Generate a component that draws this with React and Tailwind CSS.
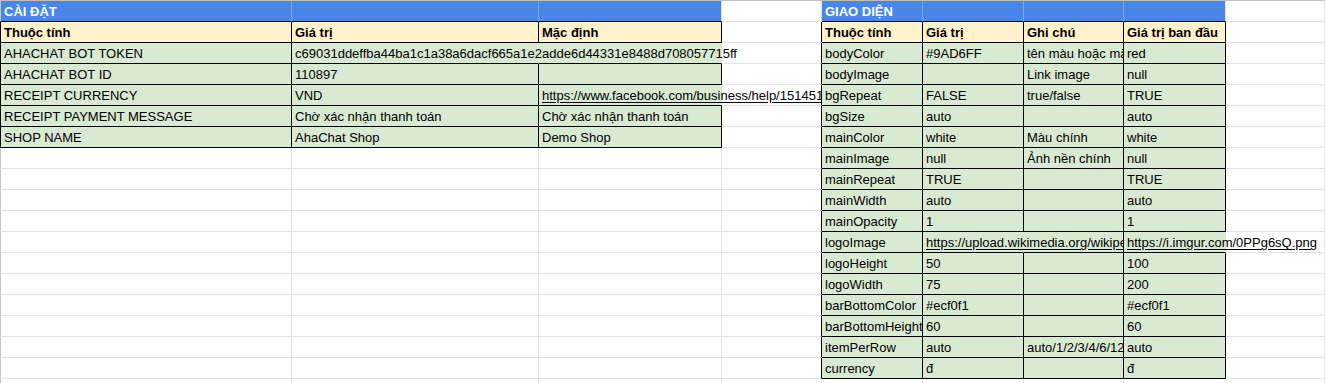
import React from "react";

const COLS = [
  "w-[292px] shrink-0",
  "w-[247px] shrink-0",
  "w-[183px] shrink-0",
  "w-[100px] shrink-0",
  "w-[101px] shrink-0",
  "w-[101px] shrink-0",
  "w-[100px] shrink-0",
  "w-[102px] shrink-0",
  "flex-1 min-w-0",
];

const BG = {
  blue: "bg-[#4a86e8]",
  yellow: "bg-[#fff2cc]",
  green: "bg-[#d9ead3]",
  white: "bg-white",
};

const RIGHT = {
  black: "border-r-black",
  grid: "border-r-[#e2e2e2]",
  blue: "border-r-[#7ea5e8]",
  none: "border-r-transparent",
};

const BOTTOM = {
  black: "border-b-black",
  grid: "border-b-[#e2e2e2]",
};

const LEFT = {
  black: "border-l border-l-black",
  grid: "border-l border-l-[#c4c4c4]",
};

const SETTINGS = [
  ["AHACHAT BOT TOKEN", "c69031ddeffba44ba1c1a38a6dacf665a1e2adde6d44331e8488d708057715ff", ""],
  ["AHACHAT BOT ID", "110897", ""],
  ["RECEIPT CURRENCY", "VND", "https://www.facebook.com/business/help/1514518578593577"],
  ["RECEIPT PAYMENT MESSAGE", "Chờ xác nhận thanh toán", "Chờ xác nhận thanh toán"],
  ["SHOP NAME", "AhaChat Shop", "Demo Shop"],
];

const THEME = [
  ["bodyColor", "#9AD6FF", "tên màu hoặc mã màu", "red"],
  ["bodyImage", "", "Link image", "null"],
  ["bgRepeat", "FALSE", "true/false", "TRUE"],
  ["bgSize", "auto", "", "auto"],
  ["mainColor", "white", "Màu chính", "white"],
  ["mainImage", "null", "Ảnh nền chính", "null"],
  ["mainRepeat", "TRUE", "", "TRUE"],
  ["mainWidth", "auto", "", "auto"],
  ["mainOpacity", "1", "", "1"],
  ["logoImage", "https://upload.wikimedia.org/wikipedia/commons/a/ab/Logo.png", "", "https://i.imgur.com/0PPg6sQ.png"],
  ["logoHeight", "50", "", "100"],
  ["logoWidth", "75", "", "200"],
  ["barBottomColor", "#ecf0f1", "", "#ecf0f1"],
  ["barBottomHeight", "60", "", "60"],
  ["itemPerRow", "auto", "auto/1/2/3/4/6/12", "auto"],
  ["currency", "đ", "", "đ"],
];

// text that spills over empty neighbours (row-col -> clip width class)
const SPILL = {
  "3-1": "w-[526px]",
  "5-2": "w-[279px]",
  "12-5": "w-[197px]",
  "12-7": "w-[198px]",
};

const HIDDEN_RIGHT = ["3-1", "3-2", "5-2", "12-5", "12-7"];
const LINKS = ["5-2", "12-5", "12-7"];

const inTable = (r, c) =>
  (r >= 2 && r <= 7 && c >= 0 && c <= 2) || (r >= 2 && r <= 18 && c >= 4 && c <= 7);
const isBlue = (r, c) => r === 1 && ((c >= 0 && c <= 2) || (c >= 4 && c <= 7));

function textAt(r, c) {
  if (r === 1) return c === 0 ? "CÀI ĐẶT" : c === 4 ? "GIAO DIỆN" : "";
  if (r === 2)
    return ["Thuộc tính", "Giá trị", "Mặc định", "", "Thuộc tính", "Giá trị", "Ghi chú", "Giá trị ban đầu", ""][c];
  if (c <= 2) return SETTINGS[r - 3]?.[c] ?? "";
  if (c >= 4 && c <= 7) return THEME[r - 3]?.[c - 4] ?? "";
  return "";
}

function Cell({ r, c }) {
  const key = `${r}-${c}`;
  const text = textAt(r, c);
  const bg = isBlue(r, c) ? BG.blue : r === 2 && inTable(r, c) ? BG.yellow : inTable(r, c) ? BG.green : BG.white;

  let right = RIGHT.grid;
  if (inTable(r, c) || inTable(r, c + 1)) right = RIGHT.black;
  else if (isBlue(r, c) && isBlue(r, c + 1)) right = RIGHT.blue;
  if (HIDDEN_RIGHT.includes(key)) right = RIGHT.none;

  const bottom = inTable(r, c) || inTable(r + 1, c) ? BOTTOM.black : BOTTOM.grid;
  const left = c === 0 ? (inTable(r, 0) ? LEFT.black : LEFT.grid) : "";

  const weight = r <= 2 ? "font-bold" : "";
  const color = r === 1 ? "text-white" : "text-black";
  const spill = SPILL[key];
  const link = LINKS.includes(key) ? "underline underline-offset-[2px]" : "";

  return (
    <div
      className={`${COLS[c]} ${bg} ${right} ${bottom} ${left} h-[21px] border-r border-b pl-[3px] pt-px leading-[20px] whitespace-nowrap ${
        spill ? "overflow-visible" : "overflow-hidden"
      } ${weight} ${color}`}
    >
      {spill ? (
        <span className={`relative z-10 block overflow-hidden ${spill} ${link}`}>{text}</span>
      ) : (
        <span className={link}>{text}</span>
      )}
    </div>
  );
}

export default function App() {
  const rows = Array.from({ length: 19 }, (_, i) => i + 1);
  return (
    <div className="w-[1325px] h-[383px] overflow-hidden bg-white border-t border-t-[#c0c0c0] font-['Liberation_Sans',Arial,sans-serif] text-[13px]">
      {rows.map((r) => (
        <div key={r} className="flex">
          {COLS.map((_, c) => (
            <Cell key={c} r={r} c={c} />
          ))}
        </div>
      ))}
    </div>
  );
}
